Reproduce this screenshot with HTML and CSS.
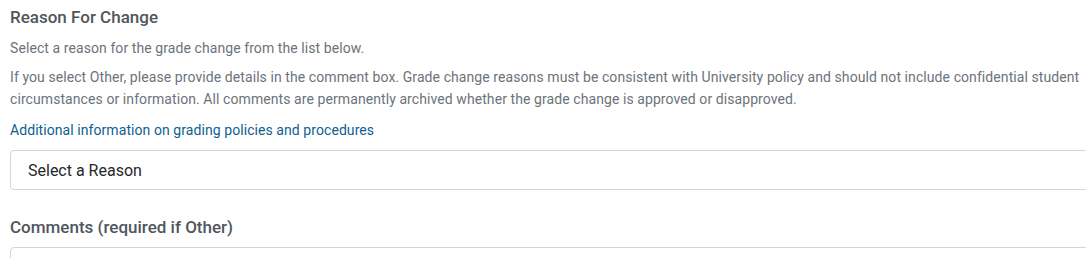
FILE: index.html
```html
<!DOCTYPE html>
<html>
<head>
<meta charset="utf-8">
<link rel="stylesheet" href="styles.css">
</head>
<body>
<main class="form">
  <section class="group">
    <h2 class="label">Reason For Change</h2>
    <p class="help">Select a reason for the grade change from the list below.</p>
    <p class="help">If you select Other, please provide details in the comment box. Grade change reasons must be consistent with University policy and should not include confidential student circumstances or information. All comments are permanently archived whether the grade change is approved or disapproved.</p>
    <a class="link" href="#">Additional information on grading policies and procedures</a>
    <div class="select">Select a Reason</div>
  </section>
  <section class="group">
    <h2 class="label">Comments (required if Other)</h2>
    <div class="textarea"></div>
  </section>
</main>
</body>
</html>
```
FILE: styles.css
```css
html, body {
  margin: 0;
  padding: 0;
  background: #fff;
  overflow: hidden;
}
body {
  font-family: Roboto, "Liberation Sans", sans-serif;
}
.form {
  padding: 0 0 0 10px;
  width: 1090px;
}
.group {
  display: flex;
  flex-direction: column;
  align-items: flex-start;
}
.label {
  margin: 0;
  font-size: 17px;
  font-weight: 500;
  line-height: 22px;
  color: #50565c;
  padding-top: 6px;
}
.help {
  margin: 0;
  font-size: 14px;
  line-height: 22px;
  letter-spacing: 0.08px;
  color: #6c737a;
  width: 1074px;
}
.label + .help {
  margin-top: 9px;
}
.help + .help {
  margin-top: 7px;
}
.link {
  margin-top: 9px;
  font-size: 14px;
  line-height: 22px;
  letter-spacing: 0.07px;
  color: #0d5f8e;
  text-decoration: none;
}
.select {
  box-sizing: border-box;
  margin-top: 9px;
  width: 100%;
  height: 40px;
  border: 1px solid #d3d4d9;
  border-radius: 4px;
  padding: 0 17px;
  display: flex;
  align-items: center;
  font-size: 16px;
  color: #25282b;
}
.group + .group {
  margin-top: 21px;
}
.group + .group .label {
  padding-top: 5px;
}
.textarea {
  box-sizing: border-box;
  margin-top: 9px;
  width: 100%;
  height: 80px;
  border: 1px solid #d3d4d9;
  border-radius: 4px;
}
```
